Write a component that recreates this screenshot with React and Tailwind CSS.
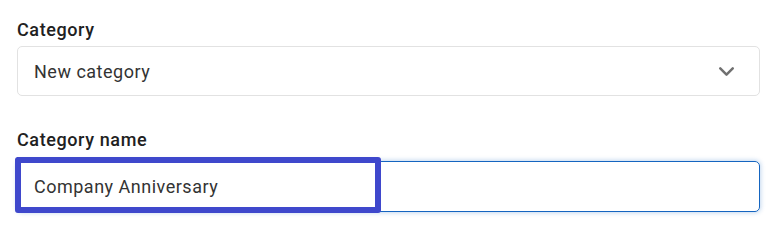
import { ChevronDown } from 'lucide-react';

export default function App() {
  return (
    <div className="w-[777px] h-[231px] bg-white font-['Roboto',sans-serif] pl-[17px] pr-[17px] pt-[18px] relative">
      <div className="w-[743px]">
        <div className="text-[18px] leading-6 font-medium tracking-[0.6px] text-[#212121] mb-[4px]">Category</div>
        <div className="h-[50px] border border-[#e2e2e2] rounded-[5px] flex items-center justify-between pl-4 pr-[20px] text-[18px] tracking-[0.5px] text-[#333]">
          <span>New category</span>
          <ChevronDown className="w-[25px] h-[25px] text-[#707070]" strokeWidth={2.4} />
        </div>

        <div className="text-[18px] leading-6 font-medium tracking-[0.6px] text-[#212121] mt-[32px] mb-[9px]">Category name</div>
        <div className="relative">
          <input
            type="text"
            defaultValue="Company Anniversary"
            className="w-full h-[51px] border border-[#1565c0] rounded-[5px] pl-4 text-[18px] tracking-[0.5px] text-[#333] outline-none shadow-[0_0_4px_1px_rgba(21,101,192,0.25)]"
          />
          {/* highlight overlay */}
          <div className="absolute left-[-2px] top-[-4px] w-[366px] h-[56px] border-[6px] border-[#3f48cc] rounded-[3px] pointer-events-none" />
        </div>
      </div>
    </div>
  );
}
